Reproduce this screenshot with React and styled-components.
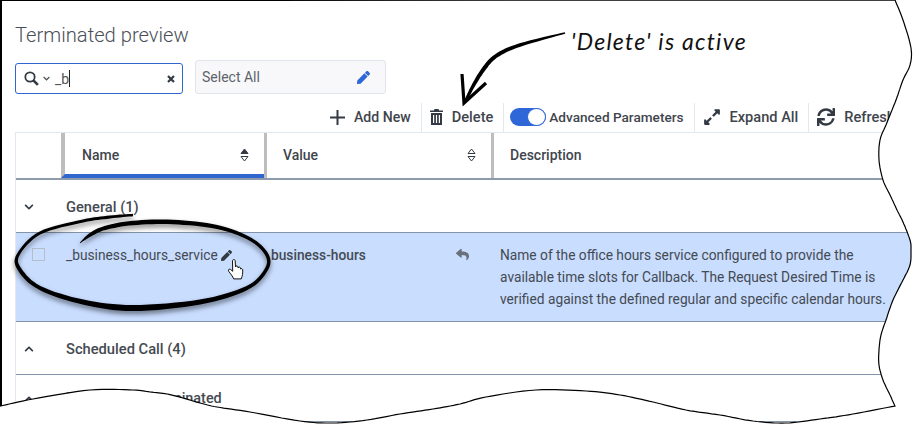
import styled, { createGlobalStyle } from "styled-components"
import { FaChevronDown, FaChevronUp, FaExpandAlt, FaPen, FaReply, FaSync } from "react-icons/fa"

const GlobalStyle = createGlobalStyle`
  html, body {
    margin: 0;
    background: #fff;
    overflow: hidden;
  }
  * {
    box-sizing: border-box;
  }
`

const Page = styled.div`
  position: relative;
  width: 913px;
  height: 424px;
  overflow: hidden;
  background: #fff;
  font-family: Roboto, "Liberation Sans", sans-serif;
  font-size: 14px;
  color: #444a52;
`
const Panel = styled.div`
  width: 960px;
  padding: 23px 0 0 15px;
`
const Title = styled.h1`
  margin: 0 0 13px;
  font-size: 20.2px;
  line-height: 24px;
  font-weight: 300;
  color: #4a4f57;
`
const FilterRow = styled.div`
  display: flex;
  align-items: flex-end;
  gap: 12px;
  height: 34px;
`
const SearchBox = styled.div`
  display: flex;
  align-items: center;
  width: 168px;
  height: 31px;
  padding: 0 7px 0 8px;
  border: 1px solid #2f66d0;
  border-radius: 3px;
  color: #333a44;
`
const SearchValue = styled.span`
  flex: 1;
  margin-left: 5px;
  font-size: 14px;
  color: #555;
`
const Caret = styled.span`
  display: inline-block;
  width: 1px;
  height: 17px;
  vertical-align: -3px;
  background: #222;
`
const SelectBox = styled.div`
  display: flex;
  align-items: center;
  justify-content: space-between;
  width: 191px;
  height: 34px;
  padding: 0 15px 0 6px;
  border: 1px solid #e0e5ed;
  border-radius: 3px;
  background: #f8f8fa;
  color: #5d636b;
`
const Toolbar = styled.div`
  display: flex;
  height: 29px;
  margin-top: 9px;
  padding-left: 307px;
`
const ToolItem = styled.div`
  display: flex;
  align-items: center;
  gap: ${p => p.$gap || 9}px;
  height: 100%;
  padding: 0 10px 1px ${p => p.$left || 8}px;
  border-right: 1px solid #e4e9f0;
  font-size: ${p => p.$size || 14.6}px;
  font-weight: 500;
  white-space: nowrap;
  color: #3f454d;
`
const Toggle = styled.span`
  display: flex;
  justify-content: flex-end;
  width: 36px;
  height: 18px;
  border-radius: 9px;
  background: #2f66d8;
`
const ToggleKnob = styled.span`
  width: 19px;
  height: 18px;
  border: 1px solid #2f66d8;
  border-radius: 50%;
  background: #fff;
`
const Table = styled.div`
  border-top: 1px solid #e2e8f0;
  border-left: 1px solid #e2e8f0;
`
const columns = "45px 203px 227px 1fr"
const HeadRow = styled.div`
  display: grid;
  grid-template-columns: ${columns};
  height: 47px;
  border-bottom: 2px solid #8e9bad;
`
const HeadCell = styled.div`
  display: flex;
  align-items: center;
  justify-content: space-between;
  padding: ${p => (p.$active ? "2px 15px 0 17px" : "0 15px 1px 16px")};
  border-left: ${p => (p.$active ? 4 : p.$blank ? 0 : 3)}px solid #bdbdbd;
  border-bottom: ${p => (p.$active ? "4px solid #2f66d0" : "0")};
  font-weight: 500;
  color: #3f454d;
`
const GroupRow = styled.div`
  display: grid;
  grid-template-columns: 50px 1fr;
  align-items: center;
  height: ${p => p.$height || 53}px;
  padding-top: 1px;
  border-bottom: 1px solid #8494a8;
  font-size: ${p => p.$size || 14.7}px;
  font-weight: 500;
  white-space: nowrap;
`
const GroupIcon = styled.span`
  display: flex;
  padding-left: 8px;
  color: #333a44;
`
const DataRow = styled.div`
  display: grid;
  grid-template-columns: ${columns};
  height: 89px;
  padding-top: 11px;
  background: #c9ddff;
  border-bottom: 1px solid #8494a8;
  font-size: 13.75px;
  line-height: 22px;
`
const CheckCell = styled.div`
  padding: 4px 0 0 16px;
`
const Checkbox = styled.span`
  display: block;
  width: 13px;
  height: 13px;
  border: 1.5px solid #b5bdca;
`
const NameCell = styled.div`
  display: flex;
  align-items: flex-start;
  gap: 3px;
  padding-left: 5px;
`
const EditIcon = styled.span`
  display: flex;
  padding-top: 6px;
  color: #333a44;
`
const ValueCell = styled.div`
  display: flex;
  justify-content: space-between;
  padding: 0 22px 0 7px;
  font-weight: 500;
`
const RevertIcon = styled.span`
  display: flex;
  padding-top: 4px;
  color: #68707b;
`
const DescriptionCell = styled.div`
  width: 402px;
  padding-left: 9px;
`
const Overlay = styled.svg`
  position: absolute;
  top: 0;
  left: 0;
  pointer-events: none;
`
const Note = styled.div`
  position: absolute;
  top: 27px;
  left: 571px;
  font-family: Lato, sans-serif;
  font-style: italic;
  font-size: 23px;
  line-height: 28px;
  letter-spacing: 1.25px;
  white-space: nowrap;
  color: #111;
`

// catmull-rom through [x, y, width] points, sampled into a dense line
function smooth(points) {
  const line = []
  for (let i = 0; i < points.length - 1; i++) {
    const p0 = points[Math.max(i - 1, 0)]
    const p1 = points[i]
    const p2 = points[i + 1]
    const p3 = points[Math.min(i + 2, points.length - 1)]
    for (let s = 0; s < 8; s++) {
      const t = s / 8
      line.push(p1.map((_, k) =>
        0.5 * (2 * p1[k] + (p2[k] - p0[k]) * t + (2 * p0[k] - 5 * p1[k] + 4 * p2[k] - p3[k]) * t * t + (3 * p1[k] - p0[k] - 3 * p2[k] + p3[k]) * t * t * t)
      ))
    }
  }
  line.push(points[points.length - 1])
  return line
}

// turn a centre line into a filled stroke of varying width
function ribbon(points) {
  const line = smooth(points)
  const left = []
  const right = []
  line.forEach((p, i) => {
    const a = line[Math.max(i - 1, 0)]
    const b = line[Math.min(i + 1, line.length - 1)]
    const len = Math.hypot(b[0] - a[0], b[1] - a[1]) || 1
    const nx = (a[1] - b[1]) / len
    const ny = (b[0] - a[0]) / len
    left.push(`${(p[0] + nx * p[2] / 2).toFixed(1)} ${(p[1] + ny * p[2] / 2).toFixed(1)}`)
    right.unshift(`${(p[0] - nx * p[2] / 2).toFixed(1)} ${(p[1] - ny * p[2] / 2).toFixed(1)}`)
  })
  return `M${left.concat(right).join("L")}Z`
}

const circleStroke = ribbon([
  [80, 243, 0.5], [90, 235, 3.5], [105, 228, 4], [133, 223, 4.5], [173, 222, 4.5], [217, 227, 4], [250, 239, 3.5],
  [267, 255, 3.5], [266, 270, 3.5], [247, 288, 4], [200, 302, 5], [133, 308, 6], [83, 302, 5], [40, 288, 4],
  [20, 270, 4], [18, 255, 3], [40, 233, 3], [83, 221, 3], [110, 217, 3], [133, 215, 2.5],
])
const arrowStroke = ribbon([
  [565, 33, 1.5], [520, 45, 3.5], [496, 56, 4], [483, 70, 4], [472, 88, 3.5], [465, 102, 2.5],
])

const rightEdge = smooth([
  [895, 0], [903, 20], [911, 48], [910, 65], [903, 80], [896, 100], [886, 125], [880, 140], [879, 160], [883, 180],
  [890, 195], [898, 212], [903, 222], [910, 240], [911, 250], [910, 265], [903, 280], [893, 300], [886, 320],
  [881, 335], [879, 350], [879, 365], [883, 380], [890, 395], [895, 406],
])
const bottomEdge = smooth([
  [895, 406], [853, 414], [820, 419], [786, 423], [753, 421], [720, 415], [686, 410], [653, 402], [620, 395],
  [586, 391], [536, 390], [486, 397], [460, 404], [433, 409], [400, 414], [367, 420], [333, 423], [300, 421],
  [250, 412], [217, 407], [200, 403], [183, 398], [167, 394], [150, 392], [133, 390], [90, 390], [33, 399], [0.5, 406],
])
const tearPath = `M0.5 0.5L${[...rightEdge, ...bottomEdge].map(p => `${p[0].toFixed(1)} ${p[1].toFixed(1)}`).join("L")}Z`

function SearchIcon() {
  return (
    <svg width="15" height="15" viewBox="0 0 16 16" fill="none" stroke="currentColor">
      <circle cx="6.4" cy="6.4" r="5" strokeWidth="1.9" />
      <path d="M10 10l4.8 4.8" strokeWidth="2.8" />
    </svg>
  )
}
function SmallChevron() {
  return (
    <svg width="7" height="5" viewBox="0 0 7 5" fill="none" stroke="#555" strokeWidth="1.2" style={{ marginLeft: 4 }}>
      <path d="M.6 1l2.9 2.8L6.4 1" />
    </svg>
  )
}
function ClearIcon() {
  return (
    <svg width="8" height="8" viewBox="0 0 8 8" fill="none" stroke="#333a44" strokeWidth="2.2">
      <path d="M1 1l6 6M7 1L1 7" />
    </svg>
  )
}
function PlusIcon() {
  return (
    <svg width="15" height="15" viewBox="0 0 15 15" fill="none" stroke="#333a44" strokeWidth="2">
      <path d="M7.5 0v15M0 7.5h15" />
    </svg>
  )
}
function TrashIcon() {
  return (
    <svg width="13" height="16" viewBox="0 0 13 16" fill="#333a44">
      <path fillRule="evenodd" d="M4.5 0h4l.6 1.5H13V3H0V1.5h3.9zM1 4h11v12H1zM3 6v8h1.2V6zm2.9 0v8h1.2V6zm2.9 0v8H10V6z" />
    </svg>
  )
}
function SortIcon({ active }) {
  return (
    <svg width="9" height="14" viewBox="0 0 9 14" fill="none" stroke="#333a44" strokeWidth="1">
      <path d="M4.5 1L8 5.5H1z" fill={active ? "#333a44" : "none"} />
      <path d="M1 8.5h7L4.5 13z" />
    </svg>
  )
}
function HandCursor() {
  return (
    <path
      d="M232.5 261c0-2 2.6-2 2.7 0l.3 6c.2-1.6 2.4-1.5 2.5 0l.2 1c.2-1.4 2.2-1.3 2.3.2l.1 1c.3-1 2-.8 2.1.7
      .2 3-.2 6-1.5 9h-7.5c-1-2.5-3-5-5-7.6-1-1.6.6-2.8 2-1.8l2 1.8z"
      fill="#fff"
      stroke="#111"
      strokeWidth="1"
      strokeLinejoin="round"
    />
  )
}

export default function App() {
  return (
    <Page>
      <GlobalStyle />
      <Panel>
        <Title>Terminated preview</Title>
        <FilterRow>
          <SearchBox>
            <SearchIcon />
            <SmallChevron />
            <SearchValue>_b<Caret /></SearchValue>
            <ClearIcon />
          </SearchBox>
          <SelectBox>
            Select All
            <FaPen size={13} color="#2f66d8" />
          </SelectBox>
        </FilterRow>
        <Toolbar>
          <ToolItem $size={14.1}><PlusIcon />Add New</ToolItem>
          <ToolItem><TrashIcon />Delete</ToolItem>
          <ToolItem $gap={3} $left={6} $size={13.6}><Toggle><ToggleKnob /></Toggle>Advanced Parameters</ToolItem>
          <ToolItem><FaExpandAlt size={18} color="#333a44" />Expand All</ToolItem>
          <ToolItem><FaSync size={18} color="#333a44" />Refresh</ToolItem>
        </Toolbar>
        <Table>
          <HeadRow>
            <HeadCell $blank />
            <HeadCell $active>Name<SortIcon active /></HeadCell>
            <HeadCell>Value<SortIcon /></HeadCell>
            <HeadCell>Description</HeadCell>
          </HeadRow>
          <GroupRow>
            <GroupIcon><FaChevronDown size={10} /></GroupIcon>
            General (1)
          </GroupRow>
          <DataRow>
            <CheckCell><Checkbox /></CheckCell>
            <NameCell>
              _business_hours_service
              <EditIcon><FaPen size={11} /></EditIcon>
            </NameCell>
            <ValueCell>
              business-hours
              <RevertIcon><FaReply size={13} /></RevertIcon>
            </ValueCell>
            <DescriptionCell>
              Name of the office hours service configured to provide the available time slots for Callback. The Request Desired Time is verified against the defined regular and specific calendar hours.
            </DescriptionCell>
          </DataRow>
          <GroupRow>
            <GroupIcon><FaChevronUp size={10} /></GroupIcon>
            Scheduled Call (4)
          </GroupRow>
          <GroupRow $height={47} $size={14.4}>
            <GroupIcon><FaChevronUp size={10} /></GroupIcon>
            Preview Call Terminated
          </GroupRow>
        </Table>
      </Panel>
      <Overlay width="913" height="424" viewBox="0 0 913 424">
        <path d={`M0 0H913V424H0Z ${tearPath}`} fill="#fff" fillRule="evenodd" />
        <path d={tearPath} fill="none" stroke="#000" strokeWidth="1.2" />
        <path d="M1 0V406" fill="none" stroke="#000" strokeWidth="2" />
        <path d={circleStroke} fill="#000" style={{ filter: "drop-shadow(0 3px 2.5px rgba(0,0,0,.5))" }} />
        <path d={arrowStroke} fill="#000" />
        <path d="M462 74L464 103L486 83" fill="none" stroke="#000" strokeWidth="3.2" />
        <HandCursor />
      </Overlay>
      <Note>'Delete' is active</Note>
    </Page>
  )
}
